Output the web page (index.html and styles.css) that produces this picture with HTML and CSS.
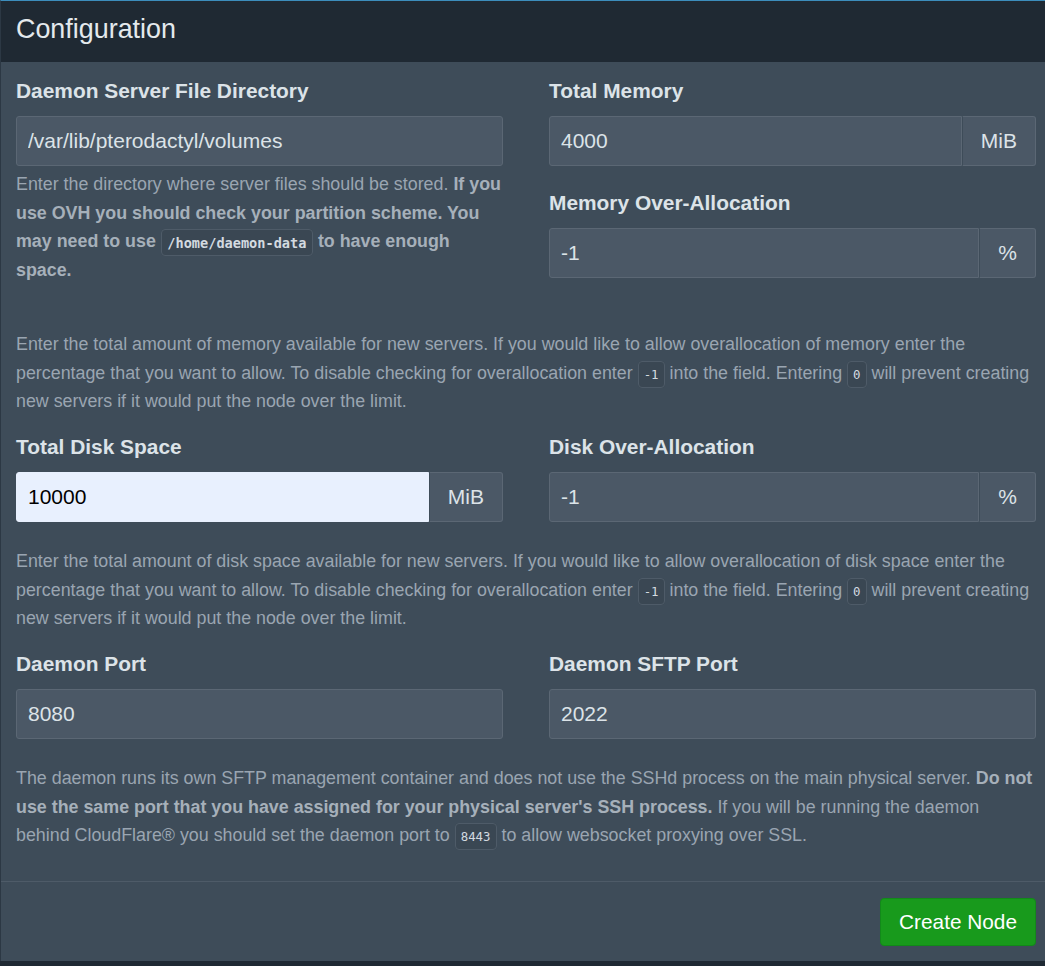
FILE: index.html
```html
<!DOCTYPE html>
<html lang="en">
<head>
<meta charset="utf-8">
<title>Configuration</title>
<link rel="stylesheet" href="styles.css">
</head>
<body>
<div class="box">
  <div class="box-header">
    <h3 class="box-title">Configuration</h3>
  </div>
  <div class="box-body">
    <div class="row">
      <div class="col">
        <div class="form-group">
          <label class="control-label">Daemon Server File Directory</label>
          <input class="form-control" type="text" value="/var/lib/pterodactyl/volumes">
          <p class="help help-inline">Enter the directory where server files should be stored. <strong>If you use OVH you should check your partition scheme. You may need to use <code>/home/daemon-data</code> to have enough space.</strong></p>
        </div>
      </div>
      <div class="col">
        <div class="form-group">
          <label class="control-label">Total Memory</label>
          <div class="input-group">
            <input class="form-control" type="text" value="4000">
            <span class="addon">MiB</span>
          </div>
        </div>
        <div class="form-group">
          <label class="control-label">Memory Over-Allocation</label>
          <div class="input-group">
            <input class="form-control" type="text" value="-1">
            <span class="addon">%</span>
          </div>
        </div>
      </div>
    </div>
    <p class="help help-full">Enter the total amount of memory available for new servers. If you would like to allow overallocation of memory enter the percentage that you want to allow. To disable checking for overallocation enter <code>-1</code> into the field. Entering <code>0</code> will prevent creating new servers if it would put the node over the limit.</p>

    <div class="row">
      <div class="col">
        <div class="form-group">
          <label class="control-label">Total Disk Space</label>
          <div class="input-group">
            <input class="form-control autofill" type="text" value="10000">
            <span class="addon">MiB</span>
          </div>
        </div>
      </div>
      <div class="col">
        <div class="form-group">
          <label class="control-label">Disk Over-Allocation</label>
          <div class="input-group">
            <input class="form-control" type="text" value="-1">
            <span class="addon">%</span>
          </div>
        </div>
      </div>
    </div>
    <p class="help help-full">Enter the total amount of disk space available for new servers. If you would like to allow overallocation of disk space enter the percentage that you want to allow. To disable checking for overallocation enter <code>-1</code> into the field. Entering <code>0</code> will prevent creating new servers if it would put the node over the limit.</p>

    <div class="row">
      <div class="col">
        <div class="form-group">
          <label class="control-label">Daemon Port</label>
          <input class="form-control" type="text" value="8080">
        </div>
      </div>
      <div class="col">
        <div class="form-group">
          <label class="control-label">Daemon SFTP Port</label>
          <input class="form-control" type="text" value="2022">
        </div>
      </div>
    </div>
    <p class="help help-full">The daemon runs its own SFTP management container and does not use the SSHd process on the main physical server. <strong>Do not use the same port that you have assigned for your physical server's SSH process.</strong> If you will be running the daemon behind CloudFlare&reg; you should set the daemon port to <code>8443</code> to allow websocket proxying over SSL.</p>
  </div>
  <div class="box-footer">
    <button class="btn-success" type="submit">Create Node</button>
  </div>
</div>
</body>
</html>
```

FILE: styles.css
```css
* {
  box-sizing: border-box;
}

html, body {
  margin: 0;
  padding: 0;
}

body {
  background: #1f2933;
  font-family: "Liberation Sans", Arial, sans-serif;
  color: #dce3e8;
  width: 1045px;
  height: 966px;
  overflow: hidden;
}

.box {
  background: #3e4c59;
  border-top: 1px solid #3c8dbc;
  border-left: 1px solid #2c3844;
}

.box-header {
  height: 61px;
  background: #1f2933;
  display: flex;
  align-items: center;
  padding: 0 15px 6px;
}

.box-title {
  margin: 0;
  font-size: 26.9px;
  font-weight: normal;
  line-height: 32px;
  color: #e4e9ed;
}

.box-body {
  padding: 15px 9px 14px 15px;
}

.row {
  display: grid;
  grid-template-columns: 1fr 1fr;
  column-gap: 46px;
}

.col {
  display: flex;
  flex-direction: column;
}

.form-group {
  display: flex;
  flex-direction: column;
  margin-bottom: 23px;
}

.control-label {
  display: block;
  font-size: 20.9px;
  font-weight: bold;
  line-height: 28px;
  margin-bottom: 11px;
  color: #dce3e8;
}

.form-control {
  display: block;
  width: 100%;
  height: 50px;
  margin: 0;
  padding: 0 11px;
  font-family: "Liberation Sans", Arial, sans-serif;
  font-size: 21px;
  color: #dce3e8;
  background: #4b5866;
  border: 1px solid #5b6774;
  border-radius: 3px;
  outline: none;
}

.input-group {
  display: flex;
}

.input-group .form-control {
  flex: 1;
  min-width: 0;
  border-radius: 3px 0 0 3px;
}

.form-control.autofill {
  background: #e8f0fe;
  color: #000000;
  border-color: #e8f0fe;
}

.addon {
  display: flex;
  align-items: center;
  padding: 0 18px;
  height: 50px;
  font-size: 21px;
  color: #dce3e8;
  background: #4b5866;
  border: 1px solid #5b6774;
  border-left: 1px solid #3e4c59;
  border-radius: 0 3px 3px 0;
}

.help {
  font-size: 17.85px;
  line-height: 28.7px;
  color: #9aa5b1;
  margin: 0 0 17px;
}

.help strong {
  color: #a6b0ba;
}

.help-inline {
  margin: 4px 0 20px;
}

.help-full {
  margin-top: 2px;
}

code {
  font-family: "DejaVu Sans Mono", "Liberation Mono", monospace;
  font-size: 12.4px;
  line-height: 1;
  font-weight: normal;
  color: #d3dae0;
  background: #3a4753;
  border: 1px solid #4e5b68;
  border-radius: 4px;
  padding: 5px 5px;
}

strong code {
  font-size: 13.6px;
  font-weight: bold;
  padding: 4.5px 5.5px;
}

.box-footer {
  border-top: 1px solid #4e5b68;
  padding: 16px 9px 15px 15px;
  display: flex;
  justify-content: flex-end;
}

.btn-success {
  height: 48px;
  padding: 0 18px;
  font-family: "Liberation Sans", Arial, sans-serif;
  font-size: 20.8px;
  color: #ffffff;
  background: #189a1c;
  border: 1px solid #12891a;
  border-radius: 4px;
}
```
